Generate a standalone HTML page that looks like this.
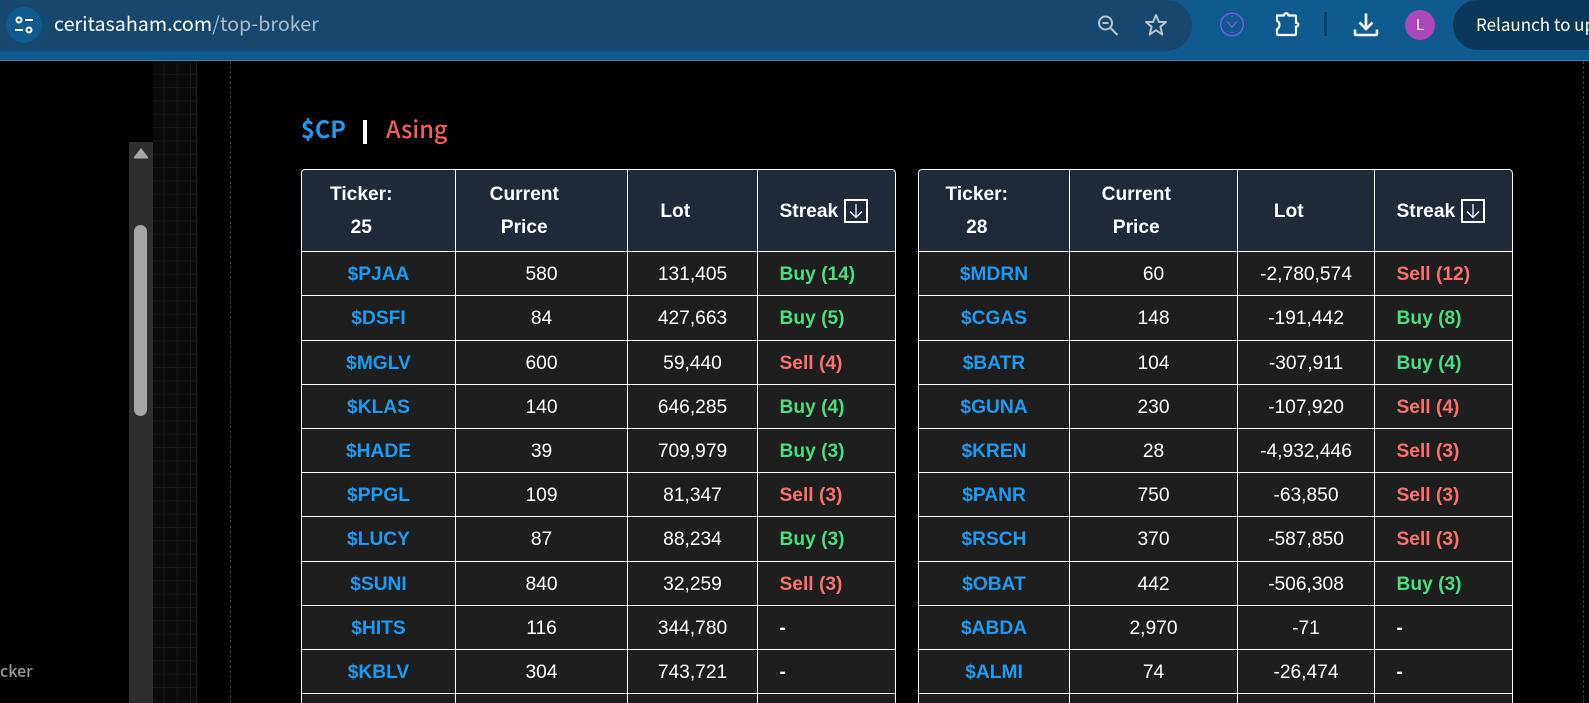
<!DOCTYPE html>
<html><head><meta charset="utf-8"><title>Top Broker</title>
<style>
html,body{margin:0;padding:0;width:1589px;height:703px;overflow:hidden;background:#000}
body{position:relative;font-family:"Liberation Sans",sans-serif;color:#fff}
.abs{position:absolute}
#bar{left:0;top:0;width:1589px;height:60px;background:#0f5a8f;border-bottom:1px solid #3a7fb5}
#addr{left:-4px;top:0;width:1196px;height:51px;background:#16486f;border-radius:0 26px 26px 0}
#circ{left:6px;top:7px;width:36px;height:36px;border-radius:50%;background:#0f5a8f}
#url{left:54px;top:8px;font:19.7px/30px "Noto Sans CJK JP","Liberation Sans",sans-serif;color:#fff;white-space:nowrap}
#url span{color:#a9bccb}
#pill{left:1453px;top:0;width:160px;height:50px;background:#0b3759;border-radius:25px}
#rel{left:1476px;top:9px;font:17px/30px "Noto Sans CJK JP","Liberation Sans",sans-serif;white-space:nowrap}
#ava{left:1405px;top:10px;width:30px;height:30px;border-radius:50%;background:#ab47bc;text-align:center;font:15px/30px "Noto Sans CJK JP",sans-serif}
#sep{left:1324px;top:12px;width:3px;height:24px;background:#0b3f66}
#sb{left:129px;top:142px;width:24px;height:561px;background:#2e2e2e}
#thumb{left:134px;top:225px;width:13px;height:191px;background:#a6a6a6;border-radius:7px}
#grid{left:153px;top:61px;width:43px;height:642px;background-color:#0a0a0a;border-right:1px solid #222;
background-image:linear-gradient(#1a1a1a 1px,transparent 1px),linear-gradient(90deg,#1a1a1a 1px,transparent 1px);background-size:13.33px 13.33px;background-position:0 -.5px,-3px 0}
#dash{left:230px;top:61px;height:642px;border-left:1px dashed #3a3a3a}
#cker{left:0;top:659px;font:500 16px/22px "Noto Sans CJK JP",sans-serif;color:#9a9a9a}
#title{left:301px;top:110px;font:500 23.5px/36px "Noto Sans CJK JP","Liberation Sans",sans-serif;white-space:nowrap}
#title b{font-weight:700;color:#1d9bf0}#title i{font-style:normal;color:#f85c5c}#title u{position:absolute;left:62px;top:10px;width:3.5px;height:24px;background:#fff}
#title i{position:absolute;left:85px}
table{position:absolute;top:169px;border-collapse:separate;border-spacing:0;table-layout:fixed;font-size:19.2px;border-top:1px solid #fff;border-left:1px solid #fff;border-top-left-radius:4px;border-top-right-radius:4px}
th,td{border-right:1px solid #fff;border-bottom:1px solid #fff;padding:0;text-align:center;overflow:hidden;white-space:nowrap}
th{background:#1f2937;height:82.2px;font-weight:700;line-height:33px;padding:1px 34.5px 0 0;box-sizing:border-box}
td{background:#1e1e1e;height:41.2px;padding-top:2px;line-height:41px}
th:first-child{border-top-left-radius:4px}th:last-child{border-top-right-radius:4px;text-align:left;padding:1px 0 0 21.5px}
td:first-child{color:#1d9bf0;font-weight:700}
td:last-child{text-align:left;padding-left:21.5px;font-weight:700}
.b{color:#4ade80}.s{color:#f87171}
.ar{display:inline-block;width:20px;height:20px;border:2px solid #fff;vertical-align:-6px;margin-left:6px;position:relative}
.ar svg{position:absolute;left:0;top:0}
</style></head><body>
<div class="abs" id="bar"></div>
<div class="abs" id="addr"></div>
<div class="abs" id="circ"></div>
<svg class="abs" style="left:14px;top:15px" width="20" height="20" viewBox="0 0 20 20" fill="none" stroke="#fff" stroke-width="2"><circle cx="5" cy="5" r="2.5"/><path d="M11 5h8"/><path d="M1 15h8"/><circle cx="15" cy="15" r="2.5"/></svg>
<div class="abs" id="url">ceritasaham.com<span>/top-broker</span></div>
<svg class="abs" style="left:1096px;top:13px" width="24" height="24" viewBox="0 0 24 24" fill="none" stroke="#b9c3ca" stroke-width="2"><circle cx="9.500" cy="10" r="6.500"/><path d="M6.500 10h6"/><path d="M14.500 15l7 7"/></svg>
<svg class="abs" style="left:1144px;top:13px" width="24" height="24" viewBox="0 0 24 24" fill="none" stroke="#b9c3ca" stroke-width="2" stroke-linejoin="round"><path d="M12 2l2.900 7h7.100l-5.600 4.700 1.900 7.800-6.300-4.300-6.300 4.300 1.900-7.800L2 9h7.100z"/></svg>
<svg class="abs" style="left:1219px;top:12px" width="26" height="26" viewBox="0 0 26 26" fill="none" stroke="#7a5cf0" stroke-width="1.300"><circle cx="13" cy="12.500" r="11.300"/><path d="M8 9.500l5 5.500 5-5.500"/><circle cx="13" cy="4.500" r=".9" fill="#7a5cf0" stroke="none"/><circle cx="13" cy="20.500" r=".9" fill="#7a5cf0" stroke="none"/></svg>
<svg class="abs" style="left:1274px;top:11px" width="26" height="26" viewBox="0 0 26 26" fill="none" stroke="#fff" stroke-width="2.200" stroke-linejoin="round"><path d="M3 4.500H10C10 1.500 14.500 1.500 14.500 4.500H21a1 1 0 0 1 1 1V12C25 11.500 25 16 22 15.500V23a1 1 0 0 1-1 1H4a1 1 0 0 1-1-1V18C6 17 6.500 11 3 10Z"/></svg>
<div class="abs" id="sep"></div>
<svg class="abs" style="left:1353px;top:12px" width="26" height="26" viewBox="0 0 26 26" fill="none" stroke="#fff" stroke-width="2.600"><path d="M13 1.500v15"/><path d="M6.500 10.500l6.500 6.500 6.500-6.500"/><path d="M2 17.500v4.500a1 1 0 0 0 1 1h20a1 1 0 0 0 1-1v-4.500"/></svg>
<div class="abs" id="ava">L</div>
<div class="abs" id="pill"></div>
<div class="abs" id="rel">Relaunch to update</div>
<div class="abs" id="grid"></div>
<div class="abs" id="sb"></div>
<svg class="abs" style="left:132px;top:146px" width="18" height="14" viewBox="0 0 18 14"><path d="M9 2l7 9a1 1 0 0 1-1 1.500H3a1 1 0 0 1-1-1.500z" fill="#a6a6a6"/></svg>
<div class="abs" id="thumb"></div>
<div class="abs" id="dash"></div>
<div class="abs" id="cker">cker</div>
<div class="abs" id="title"><b>$CP</b><u></u><i>Asing</i></div>

<table style="left:301px;width:595px">
<colgroup><col style="width:154px"><col style="width:172px"><col style="width:130px"><col style="width:138px"></colgroup>
<tr><th>Ticker:<br>25</th><th>Current<br>Price</th><th>Lot</th><th>Streak<span class="ar"><svg width="20" height="20" viewBox="0 0 20 20" fill="none" stroke="#fff" stroke-width="1.300"><path d="M10 3v13.500M4 10.500l6 6 6-6"/></svg></span></th></tr>
<tr><td>$PJAA</td><td>580</td><td>131,405</td><td class="b">Buy (14)</td></tr>
<tr><td>$DSFI</td><td>84</td><td>427,663</td><td class="b">Buy (5)</td></tr>
<tr><td>$MGLV</td><td>600</td><td>59,440</td><td class="s">Sell (4)</td></tr>
<tr><td>$KLAS</td><td>140</td><td>646,285</td><td class="b">Buy (4)</td></tr>
<tr><td>$HADE</td><td>39</td><td>709,979</td><td class="b">Buy (3)</td></tr>
<tr><td>$PPGL</td><td>109</td><td>81,347</td><td class="s">Sell (3)</td></tr>
<tr><td>$LUCY</td><td>87</td><td>88,234</td><td class="b">Buy (3)</td></tr>
<tr><td>$SUNI</td><td>840</td><td>32,259</td><td class="s">Sell (3)</td></tr>
<tr><td>$HITS</td><td>116</td><td>344,780</td><td>-</td></tr>
<tr><td>$KBLV</td><td>304</td><td>743,721</td><td>-</td></tr>
<tr><td>&nbsp;</td><td></td><td></td><td></td></tr>
</table>

<table style="left:918px;width:595px">
<colgroup><col style="width:151px"><col style="width:168px"><col style="width:137px"><col style="width:138px"></colgroup>
<tr><th>Ticker:<br>28</th><th>Current<br>Price</th><th>Lot</th><th>Streak<span class="ar"><svg width="20" height="20" viewBox="0 0 20 20" fill="none" stroke="#fff" stroke-width="1.300"><path d="M10 3v13.500M4 10.500l6 6 6-6"/></svg></span></th></tr>
<tr><td>$MDRN</td><td>60</td><td>-2,780,574</td><td class="s">Sell (12)</td></tr>
<tr><td>$CGAS</td><td>148</td><td>-191,442</td><td class="b">Buy (8)</td></tr>
<tr><td>$BATR</td><td>104</td><td>-307,911</td><td class="b">Buy (4)</td></tr>
<tr><td>$GUNA</td><td>230</td><td>-107,920</td><td class="s">Sell (4)</td></tr>
<tr><td>$KREN</td><td>28</td><td>-4,932,446</td><td class="s">Sell (3)</td></tr>
<tr><td>$PANR</td><td>750</td><td>-63,850</td><td class="s">Sell (3)</td></tr>
<tr><td>$RSCH</td><td>370</td><td>-587,850</td><td class="s">Sell (3)</td></tr>
<tr><td>$OBAT</td><td>442</td><td>-506,308</td><td class="b">Buy (3)</td></tr>
<tr><td>$ABDA</td><td>2,970</td><td>-71</td><td>-</td></tr>
<tr><td>$ALMI</td><td>74</td><td>-26,474</td><td>-</td></tr>
<tr><td>&nbsp;</td><td></td><td></td><td></td></tr>
</table>
<div class="abs" style="left:1583px;top:61px;height:642px;border-left:1px dashed #3a3a3a"></div>
</body></html>
